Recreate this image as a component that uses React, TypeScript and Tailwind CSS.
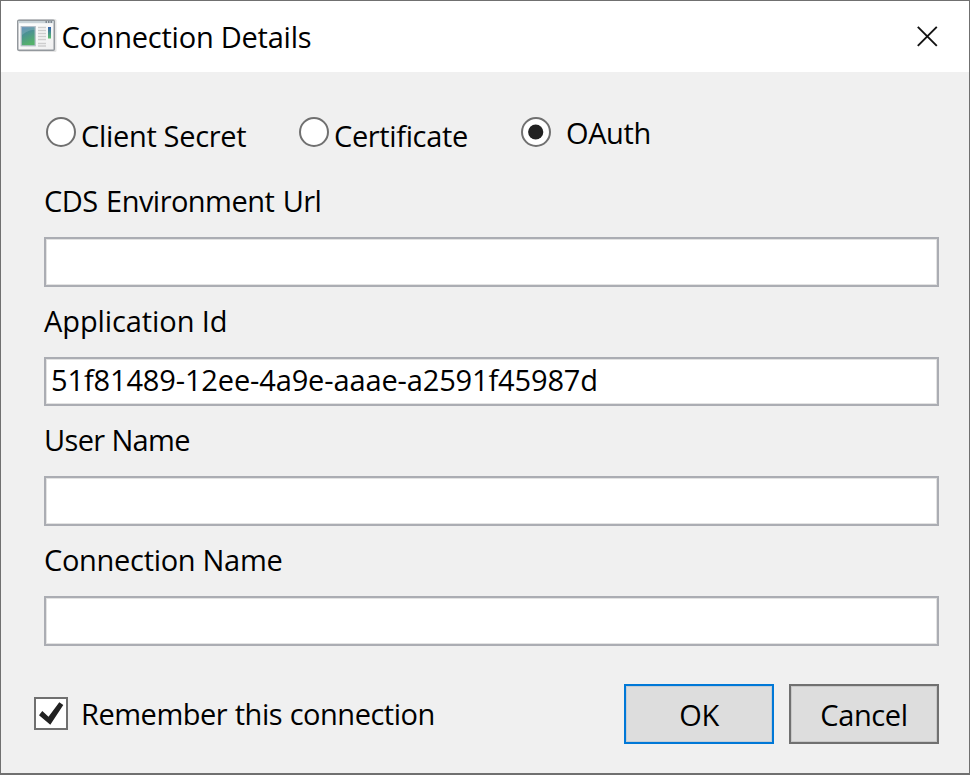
import React from 'react';

function Radio({ checked = false }: { checked?: boolean }) {
  return (
    <svg className="block shrink-0" width="30" height="30" viewBox="0 0 30 30" role="radio" aria-checked={checked}>
      <circle cx="15" cy="15" r="14" fill="#fff" stroke="#707070" strokeWidth="2" />
      {checked && <circle cx="14.7" cy="15" r="7.6" fill="#212121" />}
    </svg>
  );
}

function Field({ label, value, labelClass, className, boxClass }: { label: string; value?: string; labelClass: string; className: string; boxClass: string }) {
  return (
    <div className={className}>
      <div className="h-10 leading-10"><span className={labelClass}>{label}</span></div>
      <div className={`mt-4 border-2 border-[#abadb3] bg-white shadow-[inset_0_0_0_1px_#e3e3e3] pl-[5px] leading-[42px] ${boxClass}`}>
        {value && <span className="tracking-[-0.14px]">{value}</span>}
      </div>
    </div>
  );
}

function AppIcon() {
  return (
    <svg className="block shrink-0" width="42" height="36" viewBox="0 0 42 36">
      <defs>
        <linearGradient id="pane" x1="0" y1="0" x2="0.35" y2="1">
          <stop offset="0" stopColor="#4a7db5" />
          <stop offset="0.45" stopColor="#4b9291" />
          <stop offset="1" stopColor="#55b26a" />
        </linearGradient>
        <linearGradient id="bar" x1="0" y1="0" x2="0" y2="1">
          <stop offset="0" stopColor="#2f5fae" />
          <stop offset="1" stopColor="#5dc06c" />
        </linearGradient>
        <linearGradient id="page" x1="0" y1="0" x2="1" y2="1">
          <stop offset="0" stopColor="#fff" />
          <stop offset="1" stopColor="#f0f0f0" />
        </linearGradient>
      </defs>
      <rect x="1.5" y="2" width="38" height="33" rx="1.5" fill="#e4e4e4" />
      <rect x="0.75" y="3.25" width="36.500" height="30" rx="1" fill="url(#page)" stroke="#93989d" strokeWidth="1.5" />
      <rect x="1.5" y="4" width="35" height="2.2" fill="#c9d3d8" />
      <path d="M28.5 5h1.500m1 0h1.500m1 0h1.500" stroke="#69727a" strokeWidth="1.5" />
      <rect x="4.200" y="9.600" width="14" height="19.200" fill="url(#pane)" stroke="#b4bfc9" strokeWidth="1.2" />
      <path d="M5 18c4-3 7-5 12.600-5V10.200H5z" fill="#fff" opacity=".16" />
      <path d="M21 10.500h8M21 13.500h8M21 16.500h8M21 19.500h8M21 22.500h8M21 26.500h8M21 29h8" stroke="#cecece" strokeWidth="1.4" />
      <rect x="31" y="10" width="3" height="11.500" fill="url(#bar)" />
    </svg>
  );
}

export default function App() {
  return (
    <div className="flex h-[775px] w-[970px] flex-col overflow-hidden whitespace-nowrap border border-b-2 border-[#707070] bg-[#f0f0f0] font-['Open_Sans','Noto_Sans',sans-serif] text-[29px] text-black">
      <header className="flex h-[71px] shrink-0 items-start bg-white pl-4 pr-[31px]">
        <div className="pt-[16px]"><AppIcon /></div>
        <h1 className="ml-[2.500px] pt-4 leading-10"><span className="tracking-[-0.24px]">Connection Details</span></h1>
        <svg className="ml-auto mt-[25px] block" width="21" height="21" viewBox="0 0 21 21" fill="none" stroke="#111" strokeWidth="1.9">
          <path d="M.8.800l19 19M19.800.800l-19 19" />
        </svg>
      </header>
      <main className="flex flex-1 flex-col pl-[43px] pr-[30px]">
        <div className="flex h-[88px] items-start pl-0.5 pt-[45px]">
          <div className="flex w-[253px] items-start"><Radio /><span className="ml-[5px] -mt-[1px] leading-10 tracking-[-0.32px]">Client Secret</span></div>
          <div className="flex w-[222px] items-start"><Radio /><span className="ml-[5px] -mt-[1px] leading-10 tracking-[-0.36px]">Certificate</span></div>
          <div className="flex items-start"><Radio checked /><span className="ml-[15px] -mt-1 leading-10 tracking-[-0.4px]">OAuth</span></div>
        </div>
        <Field label="CDS Environment Url" className="mt-[21px]" boxClass="h-[50px]" labelClass="tracking-[-0.54px] [word-spacing:1.500px]" />
        <Field label="Application Id" value="51f81489-12ee-4a9e-aaae-a2591f45987d" className="mt-[14px]" boxClass="h-[49px]" labelClass="tracking-[-0.09px]" />
        <Field label="User Name" className="mt-[14px]" boxClass="h-[50px]" labelClass="tracking-[-0.65px]" />
        <Field label="Connection Name" className="mt-[14px]" boxClass="h-[50px]" labelClass="tracking-[-0.3px]" />
        <div className="-ml-[10px] mt-[38px] flex items-start">
          <svg className="mt-[13px] block" width="34" height="33" viewBox="0 0 34 33">
            <rect x="1" y="1" width="32" height="31" fill="#fff" stroke="#707070" strokeWidth="2" />
            <path d="M5 18.300L8.300 14l6.200 5.700L25.300 5.300l4 2.600L16.300 27.700z" fill="#212121" />
          </svg>
          <span className="ml-[13px] mt-[10px] leading-10 tracking-[-0.48px] [word-spacing:0.500px]">Remember this connection</span>
          <div className="ml-auto flex gap-[15px]">
            <button className="h-[60px] w-[150px] border-2 border-[#0078d7] bg-[#ddd] pt-[1px] shadow-[inset_0_0_0_1px_#c4cdd6]"><span className="tracking-[-0.4px]">OK</span></button>
            <button className="h-[60px] w-[150px] border-2 border-[#707070] bg-[#ddd] pt-[1px] shadow-[inset_0_0_0_1px_#c8c8c8]"><span className="tracking-[-0.4px]">Cancel</span></button>
          </div>
        </div>
      </main>
    </div>
  );
}
